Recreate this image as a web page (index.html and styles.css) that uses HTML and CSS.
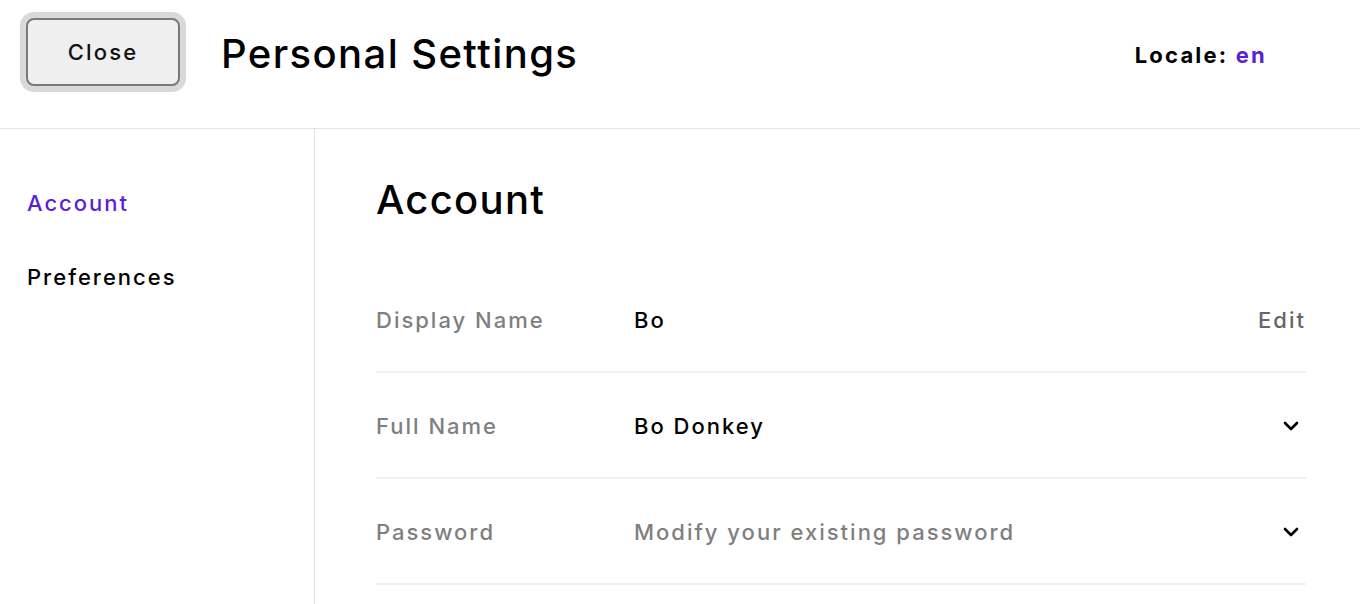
FILE: index.html
```html
<!DOCTYPE html>
<html lang="en">
<head>
<meta charset="utf-8">
<title>Personal Settings</title>
<link rel="stylesheet" href="styles.css">
</head>
<body>
<header class="topbar">
  <button class="close-btn" type="button">Close</button>
  <h1 class="page-title">Personal Settings</h1>
  <div class="locale">Locale: <span class="locale-value">en</span></div>
</header>
<div class="layout">
  <nav class="sidebar">
    <a class="nav-item active" href="#">Account</a>
    <a class="nav-item" href="#">Preferences</a>
  </nav>
  <main class="content">
    <h2 class="section-title">Account</h2>
    <div class="row">
      <div class="row-label">Display Name</div>
      <div class="row-value">Bo</div>
      <div class="row-action edit">Edit</div>
    </div>
    <div class="row">
      <div class="row-label">Full Name</div>
      <div class="row-value">Bo Donkey</div>
      <div class="row-action">
        <svg class="chevron" width="16" height="10" viewBox="0 0 16 10"><path d="M2 2 L8 8 L14 2" fill="none" stroke="#000" stroke-width="2.6" stroke-linecap="round" stroke-linejoin="round"/></svg>
      </div>
    </div>
    <div class="row">
      <div class="row-label">Password</div>
      <div class="row-value muted">Modify your existing password</div>
      <div class="row-action">
        <svg class="chevron" width="16" height="10" viewBox="0 0 16 10"><path d="M2 2 L8 8 L14 2" fill="none" stroke="#000" stroke-width="2.6" stroke-linecap="round" stroke-linejoin="round"/></svg>
      </div>
    </div>
  </main>
</div>
</body>
</html>
```
FILE: styles.css
```css
* { box-sizing: border-box; }
html, body { margin: 0; padding: 0; background: #fff; }
body {
  font-family: Inter, "Noto Sans", "Liberation Sans", sans-serif;
  color: #000;
  height: 604px;
  overflow: hidden;
}
.topbar {
  height: 129px;
  border-bottom: 1px solid #e4e4e4;
  display: flex;
  align-items: flex-start;
  padding: 18px 93px 0 26px;
}
.close-btn {
  width: 154px;
  height: 68px;
  border: 2px solid #7a7a7a;
  border-radius: 8px;
  background: #efefef;
  box-shadow: 0 0 0 6px #d9d9d9;
  font-family: inherit;
  font-size: 22px;
  font-weight: 500;
  letter-spacing: 2.2px;
  color: #111;
  padding: 0;
}
.page-title {
  margin: 0 0 0 41px;
  font-size: 40px;
  font-weight: 500;
  line-height: 72px;
  letter-spacing: 1.4px;
  flex: 1;
}
.locale {
  font-size: 22px;
  font-weight: 700;
  letter-spacing: 2.2px;
  line-height: 74px;
}
.locale-value { color: #5a1fd8; }
.layout {
  display: flex;
  height: 475px;
}
.sidebar {
  width: 315px;
  border-right: 1px solid #e4e4e4;
  display: flex;
  flex-direction: column;
  padding: 60px 0 0 27px;
  gap: 46px;
}
.nav-item {
  font-size: 22px;
  font-weight: 500;
  letter-spacing: 2px;
  line-height: 28px;
  color: #000;
  text-decoration: none;
}
.nav-item.active { color: #5a1fd8; }
.content {
  flex: 1;
  padding: 0 54px 0 61px;
}
.section-title {
  margin: 0;
  font-size: 40px;
  font-weight: 500;
  line-height: 48px;
  letter-spacing: 1.3px;
  padding-top: 47px;
  height: 138px;
}
.row {
  display: flex;
  align-items: center;
  height: 106px;
  border-bottom: 2px solid #f0f0f0;
  padding-top: 2px;
  font-size: 22px;
  letter-spacing: 2px;
  font-weight: 500;
}
.row-label {
  width: 258px;
  color: #7f7f7f;
}
.row-value { flex: 1; color: #000; }
.row-value.muted { color: #7f7f7f; }
.row-action { color: #666; }
.chevron { display: block; margin-right: 7px; }
```
